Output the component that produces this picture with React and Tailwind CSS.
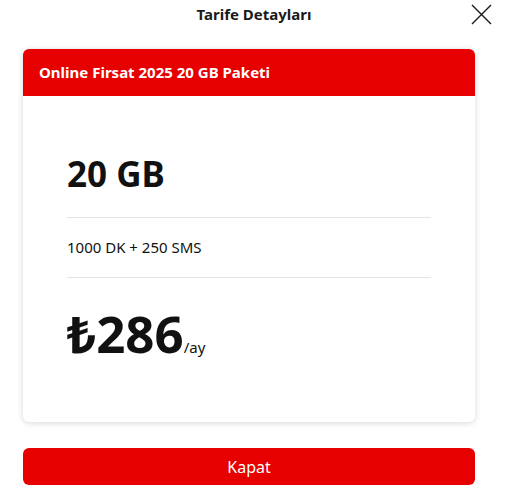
import React from 'react'

const App = () => {
  return (
    <div className="w-[508px] h-[495px] bg-white relative" style={{ fontFamily: '"Noto Sans", "Open Sans", sans-serif' }}>
      {/* Header */}
      <div className="h-[29px] flex items-center justify-center">
        <h2 className="text-[15px] font-bold text-[#1a1a1a]">Tarife Detayları</h2>
      </div>
      <button className="absolute left-[471px] top-[4px] w-[21px] h-[21px]">
        <svg viewBox="0 0 21 21" width="21" height="21" fill="none" stroke="#1a1a1a" strokeWidth="1.4">
          <path d="M1 1L20 20M20 1L1 20" />
        </svg>
      </button>

      {/* Card */}
      <div className="ml-[23px] mt-[20px] w-[452px] h-[373px] bg-white rounded-[6px] shadow-[0_1px_6px_rgba(0,0,0,0.16)] overflow-hidden">
        <div className="h-[47px] bg-[#e60000] flex items-center px-[16px]">
          <span className="text-white text-[15px] font-bold">Online Firsat 2025 20 GB Paketi</span>
        </div>
        <div className="px-[44px]">
          <div className="h-[122px] flex items-center border-b border-[#e5e5e5] pt-[38px] pb-[2px]">
            <span className="text-[35px] font-bold text-[#111]">20 GB</span>
          </div>
          <div className="h-[60px] flex items-center border-b border-[#e5e5e5]">
            <span className="text-[15px] text-[#111]">1000 DK + 250 SMS</span>
          </div>
          <div className="pt-[30px] flex items-baseline">
            <span className="text-[51px] font-bold text-[#111] leading-none">₺286</span>
            <span className="text-[15px] text-[#111]">/ay</span>
          </div>
        </div>
      </div>

      {/* Button */}
      <button className="ml-[23px] mt-[26px] w-[452px] h-[37px] bg-[#e60000] rounded-[6px] text-white text-[16px]">
        Kapat
      </button>
    </div>
  )
}

export default App
